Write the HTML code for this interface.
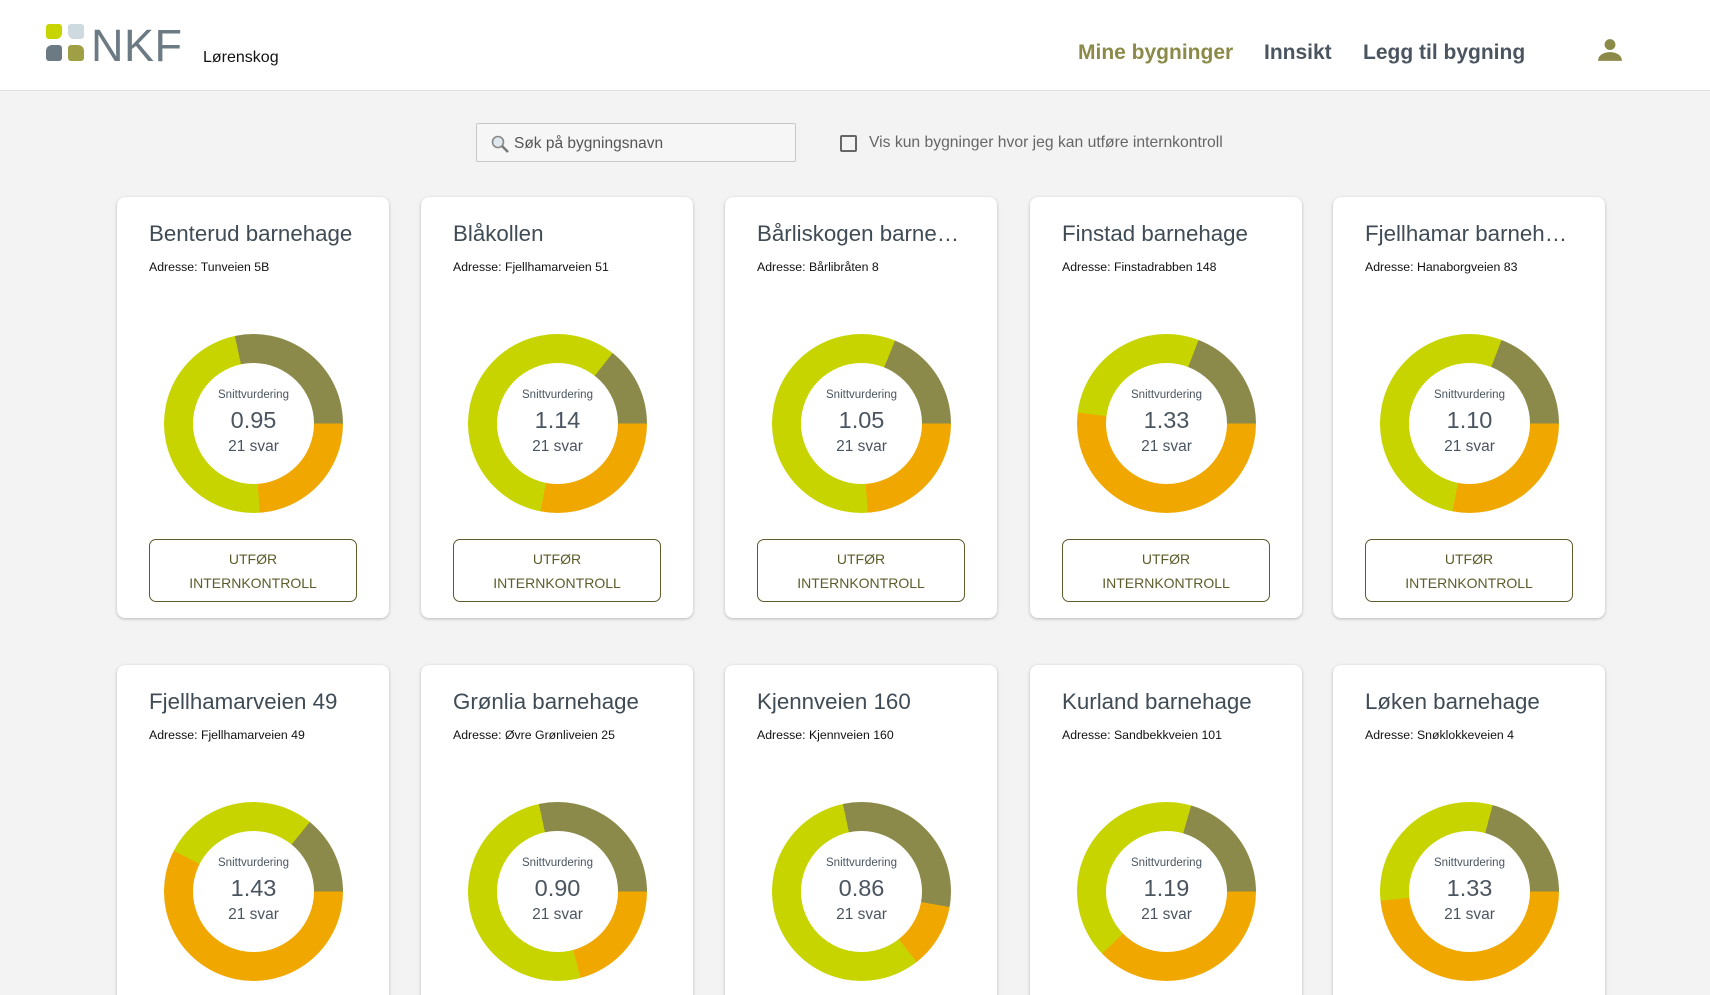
<!DOCTYPE html>
<html><head><meta charset="utf-8"><style>
*{box-sizing:border-box;margin:0;padding:0}
html,body{width:1710px;height:995px;overflow:hidden}
body{background:#f3f3f3;font-family:"Liberation Sans",Arial,sans-serif}
#wrap{position:relative;width:1710px;height:995px;overflow:hidden}
.hdr{position:absolute;left:0;top:0;width:1710px;height:91px;background:#fff;border-bottom:1px solid #dedede}
.sq{position:absolute;width:16px;height:15px;border-radius:4px}
.nkf{position:absolute;left:91px;top:20px;font-size:45px;color:#6c7a84;letter-spacing:0.5px}
.city{position:absolute;left:203px;top:49px;font-size:16px;color:#111}
.nav{position:absolute;top:41px;font-size:21px;font-weight:bold;color:#4a5560}
.search{position:absolute;left:476px;top:123px;width:320px;height:39px;border:1px solid #c8c8c8;background:#f6f6f6;border-radius:2px}
.search span{position:absolute;left:37px;top:11px;font-size:15.5px;color:#555}
.cb{position:absolute;left:840px;top:135px;width:17px;height:17px;border:2px solid #666;border-radius:2px}
.cbt{position:absolute;left:869px;top:134px;font-size:15.7px;color:#666}
.card{position:absolute;width:272px;height:421px;background:#fff;border-radius:8px;box-shadow:0 1px 3px rgba(0,0,0,.25);overflow:hidden}
.card.r2{height:340px;border-radius:8px 8px 0 0}
.card h2{position:absolute;left:32px;top:24px;font-size:22.3px;font-weight:normal;color:#3f4b55;white-space:nowrap;width:210px;overflow:hidden;text-overflow:ellipsis}
.card .ad{position:absolute;left:32px;top:63px;font-size:12.3px;color:#111}
.donut{position:absolute;left:47px;top:137px;width:179px;height:179px;border-radius:50%}
.hole{position:absolute;left:29px;top:29px;width:121px;height:121px;border-radius:50%;background:#fff;text-align:center;color:#4a5560}
.hole .a{font-size:11.5px;margin-top:26px}
.hole .b{font-size:23.5px;margin-top:6px}
.hole .c{font-size:15.5px;margin-top:4px}
.btn{position:absolute;left:32px;top:342px;width:208px;height:63px;border:1px solid #5e5c2c;border-radius:7px;text-align:center;color:#5e5c2c;font-size:14px;line-height:24px;padding-top:7px}
</style></head><body><div id="wrap">
<div class="hdr">
<div class="sq" style="left:46px;top:24px;background:#c8d400;border-radius:3px 3px 6px 3px"></div>
<div class="sq" style="left:68px;top:24px;background:#cfd9e0;border-radius:3px 3px 3px 6px"></div>
<div class="sq" style="left:46px;top:45px;background:#6c7a84;border-radius:6px 3px 3px 3px;height:16px"></div>
<div class="sq" style="left:68px;top:45px;background:#9fa045;border-radius:3px 6px 3px 3px;height:16px"></div>
<div class="nkf">NKF</div>
<div class="city">Lørenskog</div>
<div class="nav" style="left:1078px;color:#8b8a48">Mine bygninger</div>
<div class="nav" style="left:1264px">Innsikt</div>
<div class="nav" style="left:1363px">Legg til bygning</div>
<svg style="position:absolute;left:1597px;top:37px" width="26" height="26" viewBox="0 0 24 24"><circle cx="12" cy="7" r="5" fill="#8b8a48"/><path d="M1 22c0-5 5-8 11-8s11 3 11 8z" fill="#8b8a48"/></svg>
</div>
<div class="search"><svg style="position:absolute;left:13px;top:10px" width="20" height="20" viewBox="0 0 20 20"><circle cx="8" cy="8" r="5.5" fill="#dfe8ee" stroke="#888" stroke-width="1.6"/><path d="M12 12l6 6" stroke="#777" stroke-width="2.5"/></svg><span>Søk på bygningsnavn</span></div>
<div class="cb"></div><div class="cbt">Vis kun bygninger hvor jeg kan utføre internkontroll</div>
<div id="c"></div>
</div>
<script>
var d=[["Benterud barnehage","Tunveien 5B","0.95",348,90,176],["Blåkollen","Fjellhamarveien 51","1.14",38,90,191],["Bårliskogen barnehage","Bårlibråten 8","1.05",22,90,176],["Finstad barnehage","Finstadrabben 148","1.33",21,90,277],["Fjellhamar barnehage","Hanaborgveien 83","1.10",21,90,191],
["Fjellhamarveien 49","Fjellhamarveien 49","1.43",39,90,297],["Grønlia barnehage","Øvre Grønliveien 25","0.90",348,90,165],["Kjennveien 160","Kjennveien 160","0.86",348,100,142],["Kurland barnehage","Sandbekkveien 101","1.19",16,90,226],["Løken barnehage","Snøklokkeveien 4","1.33",15,90,264]];
var xs=[117,421,725,1030,1333],h="";
d.forEach(function(r,i){var a=r[3],b=r[4],c=r[5];var o=(b-a+360)%360,p=(c-a+360)%360;
var bg="conic-gradient(from "+a+"deg,#8b8a4a 0deg "+o+"deg,#f0a800 "+o+"deg "+p+"deg,#c8d400 "+p+"deg 360deg)";
h+='<div class="card'+(i<5?'':' r2')+'" style="left:'+xs[i%5]+'px;top:'+(i<5?197:665)+'px"><h2>'+r[0]+'</h2><div class="ad">Adresse: '+r[1]+'</div><div class="donut" style="background:'+bg+'"><div class="hole"><div class="a">Snittvurdering</div><div class="b">'+r[2]+'</div><div class="c">21 svar</div></div></div>'+(i<5?'<div class="btn">UTFØR<br>INTERNKONTROLL</div>':'')+'</div>';});
document.getElementById("c").innerHTML=h;
</script>
</body></html>
